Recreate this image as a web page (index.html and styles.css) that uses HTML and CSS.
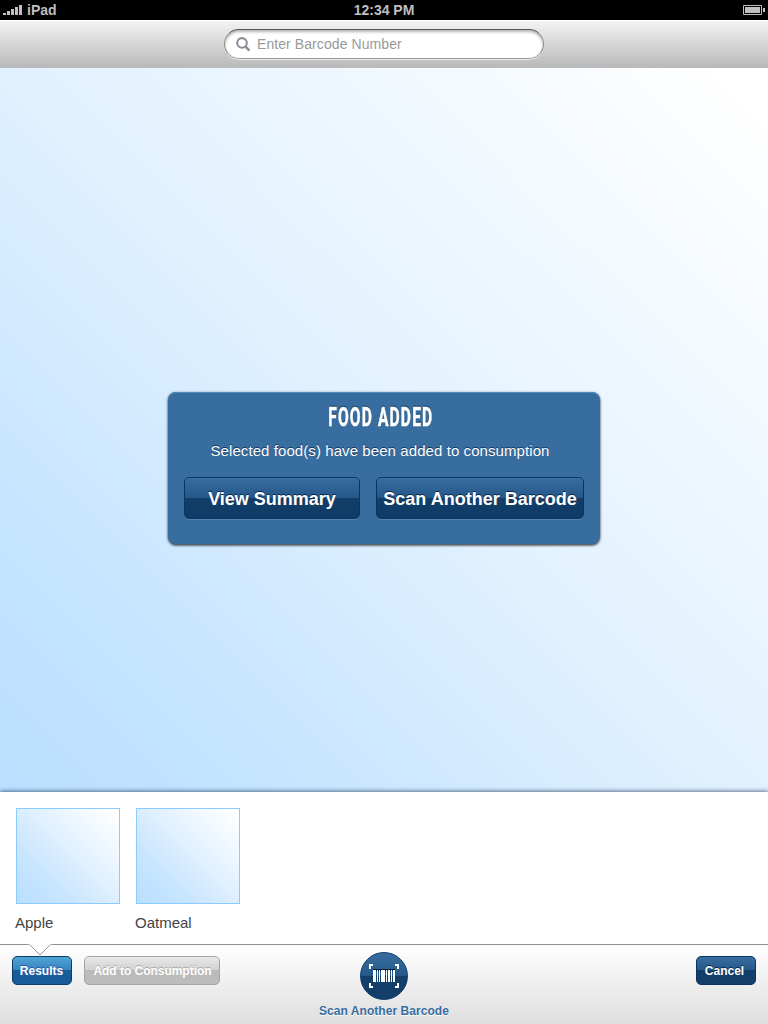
FILE: index.html
```html
<!DOCTYPE html>
<html lang="en">
<head>
<meta charset="utf-8">
<title>Scan Barcode</title>
<link rel="stylesheet" href="styles.css">
</head>
<body>
<div class="screen">
  <div class="status">
    <div class="carrier">
      <svg class="signal" width="19" height="10" viewBox="0 0 19 10" fill="#bfbfbf"><path d="M0 8h3v2H0zM4 6h3v4H4zM8 4h3v6H8zM12 2h3v8h-3zM16 0h3v10h-3z"/></svg>
      <span>iPad</span>
    </div>
    <div class="time">12:34 PM</div>
    <svg class="battery" width="22" height="10" viewBox="0 0 22 10"><path d="M.5.5h18v9H.5z" fill="none" stroke="#bfbfbf"/><path d="M2 2h15v6H2zM20 3h2v4h-2z" fill="#bfbfbf"/></svg>
  </div>
  <header class="toolbar">
    <div class="search">
      <svg width="15" height="16" viewBox="0 0 15 16" fill="none" stroke="#8a8f99"><circle cx="6" cy="6.9" r="4.8" stroke-width="2.1"/><path d="M9.4 10.4l4 4.2" stroke-width="2.6"/></svg>
      <span>Enter Barcode Number</span>
    </div>
  </header>
  <main class="viewport">
    <section class="dialog">
      <h1><svg class="dialog-title" width="106" height="24" viewBox="0 0 106 24"><text x="1.3" y="20.5" textLength="105" lengthAdjust="spacingAndGlyphs">FOOD ADDED</text></svg></h1>
      <p>Selected food(s) have been added to consumption</p>
      <div class="actions">
        <div class="big-btn summary">View Summary</div>
        <div class="big-btn another">Scan Another Barcode</div>
      </div>
    </section>
  </main>
  <section class="tray">
    <div class="food"><div class="thumb"></div><span>Apple</span></div>
    <div class="food"><div class="thumb"></div><span>Oatmeal</span></div>
  </section>
  <footer class="bottom">
    <svg class="pointer" width="24" height="12" viewBox="0 0 24 12"><path d="M0 0h24L12 11.2z" fill="#fff"/><path d="M.5.5h1L12 11 22.500.5h1" fill="none" stroke="#999"/></svg>
    <div class="left">
      <div class="btn results">Results</div>
      <div class="btn disabled">Add to Consumption</div>
    </div>
    <div class="scan">
      <div class="scan-circle">
        <svg width="30" height="24" viewBox="0 0 30 24"><path fill="#061f3c" d="M4 5h22v2H4z"/><path fill="#fff" d="M0 0h4v2H2v3H0zM26 0h4v5h-2V2h-2zM0 19h2v3h2v2H0zM28 19h2v5h-4v-2h2zM4 6h3v12H4zM8 6h1v12H8zM10 6h1v12h-1zM12 6h4v12h-4zM17 6h1v12h-1zM19 6h2v12h-2zM22 6h1v12h-1zM24 6h2v12h-2z"/></svg>
      </div>
      <span>Scan Another Barcode</span>
    </div>
    <div class="btn cancel">Cancel</div>
  </footer>
</div>
</body>
</html>
```
FILE: styles.css
```css
* { box-sizing: border-box; }
body { margin: 0; font-family: "Liberation Sans", Arial, sans-serif; }
svg { display: block; flex: none; }
.screen { width: 768px; height: 1024px; display: flex; flex-direction: column; overflow: hidden; }
.status { height: 20px; background: #000; color: #bfbfbf; font-size: 14px; font-weight: bold; line-height: 20px; display: grid; grid-template-columns: 1fr auto 1fr; align-items: center; padding: 0 3px; }
.carrier { display: flex; align-items: center; gap: 5px; }
.battery { justify-self: end; }
.toolbar { height: 48px; border-top: 1px solid #fff; background: linear-gradient(#f3f3f3, #b8b8b8); display: flex; justify-content: center; padding-top: 8px; }
.search { width: 320px; height: 30px; border-radius: 15px; background: #fff; border: 1px solid #888; border-top-color: #555; border-bottom-color: #999; box-shadow: inset 0 2px 3px rgba(0,0,0,.3), 0 1px 0 rgba(255,255,255,.65); display: flex; align-items: center; gap: 6px; padding-left: 11px; color: #999; font-size: 14px; letter-spacing: .08px; white-space: nowrap; }
.viewport { height: 724px; background: linear-gradient(45deg, #bbdfff 0%, #c5e4ff 18%, #e3f2ff 52%, #fff 97%); display: flex; justify-content: center; align-items: flex-start; padding-top: 324px; }
.dialog { width: 432px; height: 152px; border-radius: 8px; background: #386d9f; box-shadow: inset 0 1px 0 #5089b9, 0 1px 3px rgba(0,0,0,.7), 0 2px 2px rgba(0,0,0,.25); color: #fff; padding: 13px 16px 0; display: flex; flex-direction: column; align-items: center; }
.dialog h1 { margin: 0 8px 0 0; height: 24px; }
.dialog-title { overflow: visible; }
.dialog-title text { font: 700 25px Roboto, sans-serif; letter-spacing: 1.8px; fill: #fff; stroke: #fff; stroke-width: .6px; filter: drop-shadow(0 -1px 0 #12385f); }
.dialog p { margin: 13px 8px 0 0; font-size: 15px; letter-spacing: .08px; line-height: 18px; height: 35px; white-space: nowrap; text-shadow: 0 -1px 0 #12385f; }
.actions { display: flex; gap: 16px; }
.big-btn { height: 42px; border: 1px solid #0b335d; border-radius: 5px; background: linear-gradient(#386d9f, #25588a 49%, #123e69 50%, #0f3b67); box-shadow: inset 0 1px 0 rgba(80,137,185,.35), 0 1px 0 #5187b5; display: flex; align-items: center; justify-content: center; padding-top: 2px; font-size: 18px; font-weight: bold; white-space: nowrap; text-shadow: 0 -1px 0 #06264a; }
.summary { width: 176px; }
.another { width: 208px; }
.tray { position: relative; height: 152px; background: #fff; box-shadow: 0 -1px 4px rgba(0,30,60,.6); display: flex; gap: 16px; padding: 16px; }
.food { width: 104px; color: #444; font-size: 15px; }
.thumb { height: 96px; border: 1px solid #8accff; background: linear-gradient(45deg, #bbdfff 0%, #c5e4ff 24%, #e0f0ff 55%, #fff 97%); }
.food span { display: block; margin: 10px 0 0 -1px; line-height: 18px; }
.bottom { position: relative; height: 80px; border-top: 1px solid #909090; background: linear-gradient(#fff, #dedede); display: grid; grid-template-columns: 1fr 140px 1fr; padding: 0 12px; }
.pointer { position: absolute; left: 28px; top: -1px; }
.left { display: flex; gap: 12px; padding-top: 11px; }
.btn { height: 29px; border: 1px solid; border-radius: 5px; display: flex; align-items: center; justify-content: center; font-size: 12px; font-weight: bold; color: #fff; white-space: nowrap; padding-top: 1px; }
.results { width: 60px; padding-right: 1px; border-color: #0e3a68; background: linear-gradient(#50a4d4, #3583bd 49%, #195c9c 50%, #195c9c); text-shadow: 0 -1px 0 #2456a7; }
.disabled { width: 136px; padding-left: 1px; letter-spacing: -.03px; border-color: #a5a5a5; background: linear-gradient(#e9e9e9, #d0d0d0 49%, #bababa 50%, #bdbdbd); text-shadow: 0 -1px 0 #aaa; }
.scan { display: flex; flex-direction: column; align-items: center; padding-top: 7px; color: #386d9f; font-size: 12px; font-weight: bold; white-space: nowrap; }
.scan span { margin-top: 4px; line-height: 14px; letter-spacing: .05px; text-shadow: 0 1px 0 #fff; }
.scan-circle { width: 48px; height: 48px; border-radius: 50%; border: 1px solid #123d6b; background: linear-gradient(#386d9f, #25588a 50%, #123e69 51%, #123e69); display: flex; align-items: center; justify-content: center; }
.cancel { width: 60px; margin-top: 11px; justify-self: end; padding-right: 3px; border-color: #0b335d; background: linear-gradient(#386d9f, #25588a 49%, #123e69 50%, #123e69); text-shadow: 0 -1px 0 #06264a; }
```
